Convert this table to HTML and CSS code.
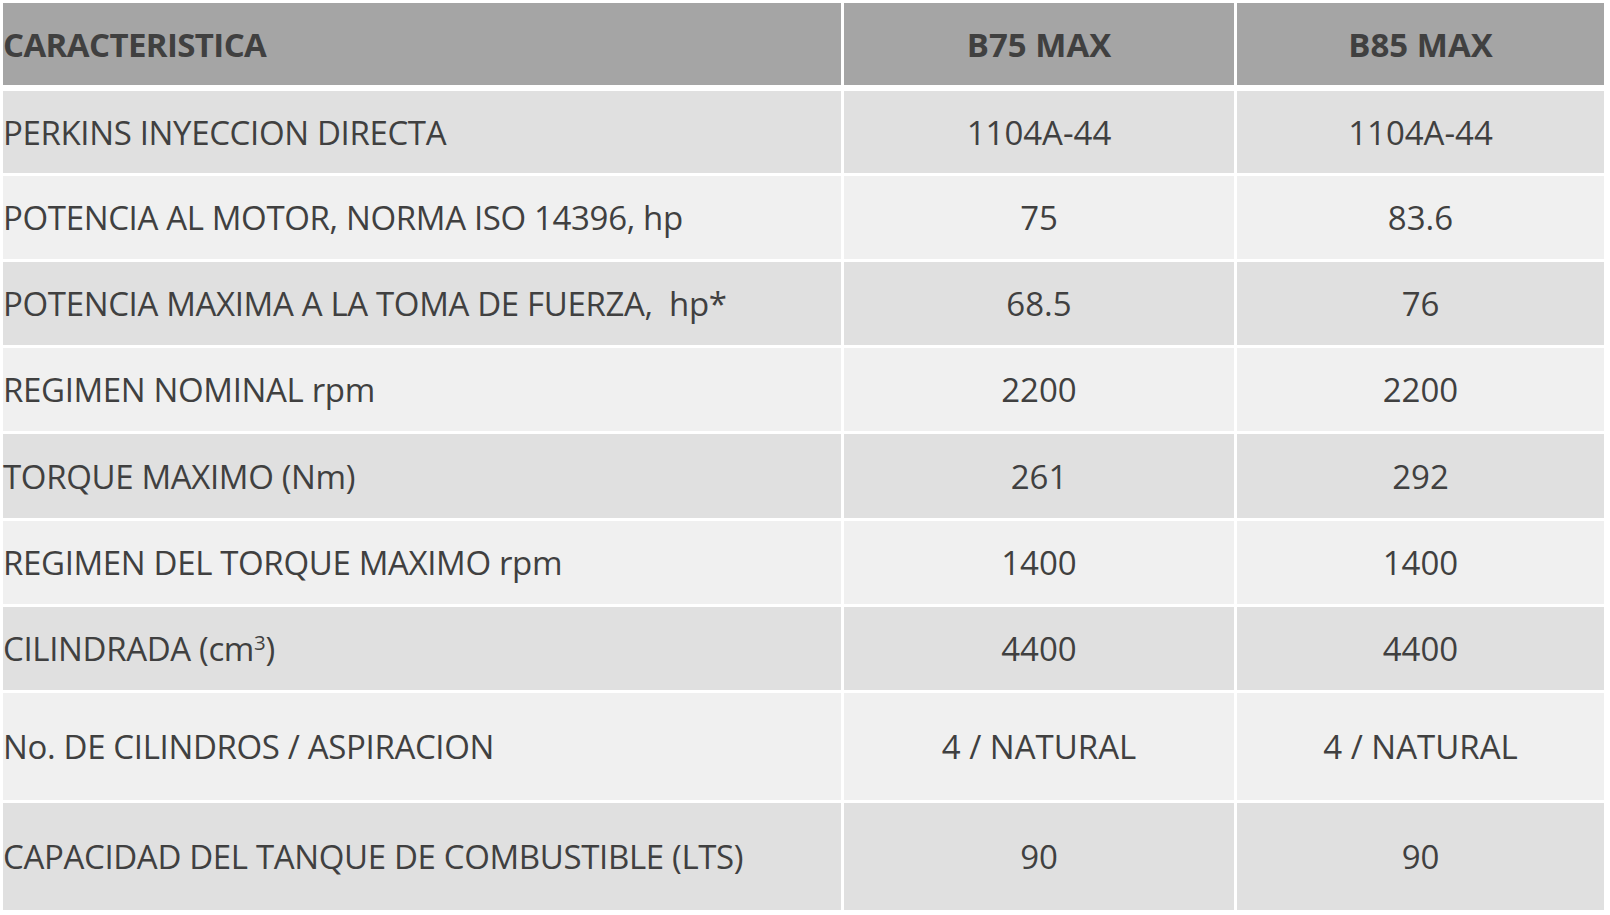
FILE: index.html
```html
<!DOCTYPE html>
<html lang="es">
<head>
<meta charset="utf-8">
<title>Caracteristicas</title>
<link rel="stylesheet" href="styles.css">
</head>
<body>
<div class="sheet">
  <div class="row head">
    <div class="cell label">CARACTERISTICA</div>
    <div class="cell val">B75 MAX</div>
    <div class="cell val">B85 MAX</div>
  </div>
  <div class="row dark h82">
    <div class="cell label">PERKINS INYECCION DIRECTA</div>
    <div class="cell val">1104A-44</div>
    <div class="cell val">1104A-44</div>
  </div>
  <div class="row light h83">
    <div class="cell label">POTENCIA AL MOTOR, NORMA ISO 14396, hp</div>
    <div class="cell val">75</div>
    <div class="cell val">83.6</div>
  </div>
  <div class="row dark h83">
    <div class="cell label">POTENCIA MAXIMA A LA TOMA DE FUERZA,&nbsp; hp*</div>
    <div class="cell val">68.5</div>
    <div class="cell val">76</div>
  </div>
  <div class="row light h83">
    <div class="cell label">REGIMEN NOMINAL rpm</div>
    <div class="cell val">2200</div>
    <div class="cell val">2200</div>
  </div>
  <div class="row dark h84">
    <div class="cell label">TORQUE MAXIMO (Nm)</div>
    <div class="cell val">261</div>
    <div class="cell val">292</div>
  </div>
  <div class="row light h83">
    <div class="cell label">REGIMEN DEL TORQUE MAXIMO rpm</div>
    <div class="cell val">1400</div>
    <div class="cell val">1400</div>
  </div>
  <div class="row dark h83">
    <div class="cell label">CILINDRADA (cm<sup>3</sup>)</div>
    <div class="cell val">4400</div>
    <div class="cell val">4400</div>
  </div>
  <div class="row light h107">
    <div class="cell label">No. DE CILINDROS / ASPIRACION</div>
    <div class="cell val">4 / NATURAL</div>
    <div class="cell val">4 / NATURAL</div>
  </div>
  <div class="row dark h107">
    <div class="cell label">CAPACIDAD DEL TANQUE DE COMBUSTIBLE (LTS)</div>
    <div class="cell val">90</div>
    <div class="cell val">90</div>
  </div>
</div>
</body>
</html>
```

FILE: styles.css
```css
html, body {
  margin: 0;
  padding: 0;
  background: #ffffff;
}

body {
  padding: 3px;
  font-family: "Open Sans", Lato, "Liberation Sans", sans-serif;
  color: #404040;
}

.sheet {
  display: flex;
  flex-direction: column;
  gap: 3px;
  width: 1601px;
}

.row {
  display: grid;
  grid-template-columns: 838px 390px 367px;
  column-gap: 3px;
}

.head {
  height: 82px;
  margin-bottom: 3px;
  font-weight: bold;
}

.head .cell { background: #a5a5a5; }
.dark .cell { background: #e0e0e0; }
.light .cell { background: #f0f0f0; }

.h82 { height: 82px; }
.h83 { height: 83px; }
.h84 { height: 84px; }
.h107 { height: 107px; }

.cell {
  display: flex;
  align-items: center;
  font-size: 33px;
  line-height: 1;
  white-space: nowrap;
}

.label {
  justify-content: flex-start;
  padding-left: 0;
  letter-spacing: -0.35px;
}

.head .label {
  letter-spacing: -0.6px;
}

.val {
  justify-content: center;
}

sup {
  font-size: 0.62em;
  line-height: 0;
  vertical-align: baseline;
  position: relative;
  top: -0.34em;
}
```
